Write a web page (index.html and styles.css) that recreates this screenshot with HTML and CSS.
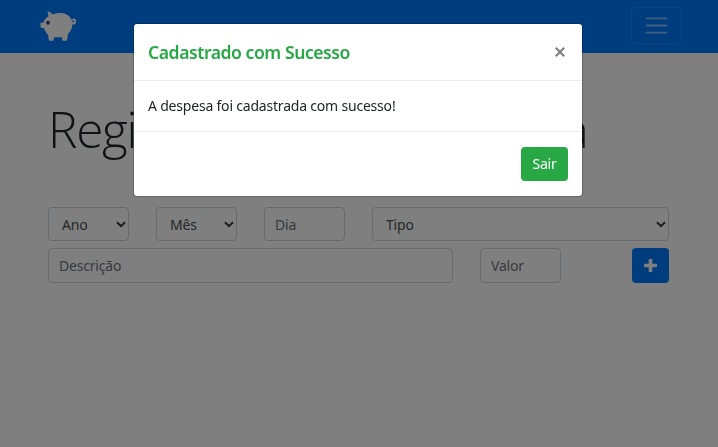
FILE: index.html
```html
<!DOCTYPE html>
<html lang="pt-br">
<head>
<meta charset="utf-8">
<title>Registro de despesa</title>
<link rel="stylesheet" href="styles.css">
</head>
<body>
<nav class="navbar">
  <svg class="logo" viewBox="0 0 38 34" width="38" height="34" aria-hidden="true">
    <path fill="#fff" d="M7.5 1.2 C10 1.5 11.5 3 12.5 4.6 C15 3.5 18 3 21 3.1 C27 3.5 31.3 7 32.4 12 C34 12.5 34.7 11.5 34.2 10.8 C32.8 11.3 31.8 10.2 32.2 9.2 C33 8 35.2 8.4 36 10.2 C36.8 13 35 15 32.3 14.4 C32 18.5 30.5 21.5 28 24 L27 30.7 H22.5 L21.8 27.3 H14.2 L13.3 30.8 H9 L8 24.7 C6 23 4.8 20.8 4 18.3 L.5 17.4 V12.8 L3.3 12.6 C4.2 9.7 6 7.8 8.5 6.2 Z"/>
    <circle cx="8" cy="12.8" r="2" fill="#4347a0"/>
  </svg>
  <button class="toggler" aria-label="Menu">
    <svg viewBox="0 0 30 30" width="27" height="27"><path stroke="rgba(255,255,255,.5)" stroke-linecap="round" stroke-miterlimit="10" stroke-width="2" d="M4 7h22M4 15h22M4 23h22"/></svg>
  </button>
</nav>
<main class="container">
  <h1 class="heading">Registro de nova despesa</h1>
  <form class="form">
    <div class="select"><span>Ano</span><svg class="chevron" viewBox="0 0 10 7"><path d="M1 1.2l4 4 4-4"/></svg></div>
    <div class="select"><span>Mês</span><svg class="chevron" viewBox="0 0 10 7"><path d="M1 1.2l4 4 4-4"/></svg></div>
    <input class="input" placeholder="Dia">
    <div class="select type"><span>Tipo</span><svg class="chevron" viewBox="0 0 10 7"><path d="M1 1.2l4 4 4-4"/></svg></div>
    <input class="input description" placeholder="Descrição">
    <input class="input" placeholder="Valor">
    <button class="add" type="button" aria-label="Adicionar">
      <svg viewBox="0 0 13 13" width="13" height="13"><path fill="#fff" d="M5.5 0h2a.8.8 0 0 1 .8.8v3.9h3.9a.8.8 0 0 1 .8.8v2a.8.8 0 0 1-.8.8H8.3v3.9a.8.8 0 0 1-.8.8h-2a.8.8 0 0 1-.8-.8V8.3H.8a.8.8 0 0 1-.8-.8v-2a.8.8 0 0 1 .8-.8h3.9V.8a.8.8 0 0 1 .8-.8z"/></svg>
    </button>
  </form>
</main>
<div class="backdrop">
  <section class="modal" role="dialog">
    <header class="modal-header">
      <h2 class="modal-title">Cadastrado com Sucesso</h2>
      <button class="close" aria-label="Fechar"><svg viewBox="0 0 10 10" width="10" height="10"><path d="M.8.8l8.4 8.4M9.2.8L.8 9.2"/></svg></button>
    </header>
    <div class="modal-body"><span>A despesa foi cadastrada com sucesso!</span></div>
    <footer class="modal-footer"><button class="exit">Sair</button></footer>
  </section>
</div>
</body>
</html>
```
FILE: styles.css
```css
* { box-sizing: border-box; }
body {
  margin: 0;
  height: 447px;
  overflow: hidden;
  background: #fff;
  color: #212529;
  font: 14px/21.6px "Noto Sans", "Open Sans", sans-serif;
}
button, input { font: inherit; }
button { padding: 0; border: 0; }
.navbar {
  display: flex;
  align-items: flex-start;
  justify-content: space-between;
  height: 53px;
  padding: 7px 36px 0 39.5px;
  background: #007bff;
}
.logo { margin-top: 2.5px; }
.toggler {
  display: flex;
  align-items: center;
  justify-content: center;
  width: 51px;
  height: 37px;
  border: 1px solid rgba(255, 255, 255, .1);
  border-radius: 4px;
  background: transparent;
}
.container { padding: 46px 49px 0 48px; }
.heading {
  margin: 0;
  height: 108px;
  font-family: "Open Sans", "Noto Sans", sans-serif;
  font-size: 49.5px;
  line-height: 60px;
  font-weight: 300;
  letter-spacing: -1.25px;
  white-space: nowrap;
}
.form {
  display: grid;
  grid-template-columns: repeat(6, 81px);
  grid-template-rows: 34px 35px;
  gap: 7px 27px;
}
.select, .input {
  width: 100%;
  height: 100%;
  min-width: 0;
  border: 1px solid #ced4da;
  border-radius: 4px;
  background: #fff;
  color: #495057;
  letter-spacing: -.2px;
}
.select {
  display: flex;
  align-items: center;
  justify-content: space-between;
  padding: 2px 2px 0 13px;
}
.chevron {
  width: 10px;
  height: 7px;
  margin-bottom: 2px;
  fill: none;
  stroke: #343a40;
  stroke-width: 2;
}
.input { padding: 0 10px; }
.input::placeholder { color: #6c757d; opacity: 1; }
.type { grid-column: span 3; }
.description { grid-column: span 4; }
.add {
  display: flex;
  align-items: center;
  justify-content: center;
  justify-self: end;
  width: 37px;
  height: 35px;
  border-radius: 4px;
  background: #007bff;
}
.backdrop {
  position: fixed;
  inset: 0;
  display: flex;
  align-items: flex-start;
  justify-content: center;
  padding: 23px 2px 0 0;
  background: rgba(0, 0, 0, .5);
}
.modal {
  width: 450px;
  height: 174px;
  border: 1px solid rgba(0, 0, 0, .2);
  border-radius: 4px;
  background: #fff;
  background-clip: padding-box;
}
.modal-header {
  display: flex;
  align-items: center;
  justify-content: space-between;
  height: 57px;
  padding: 0 17px 0 14px;
  border-bottom: 1px solid #e9ecef;
}
.modal-title {
  margin: 2px 0 0;
  color: #28a745;
  font-size: 17.6px;
  font-weight: 600;
  letter-spacing: -.46px;
}
.close {
  display: flex;
  background: transparent;
}
.close path { fill: none; stroke: #808080; stroke-width: 2.2; }
.modal-body {
  height: 50px;
  padding: 14px;
  letter-spacing: -.2px;
}
.modal-footer {
  display: flex;
  justify-content: flex-end;
  padding: 15px 14px 0;
  border-top: 1px solid #e9ecef;
}
.exit {
  width: 47px;
  height: 34px;
  border-radius: 4px;
  background: #28a745;
  color: #fff;
  letter-spacing: -.2px;
}
```
